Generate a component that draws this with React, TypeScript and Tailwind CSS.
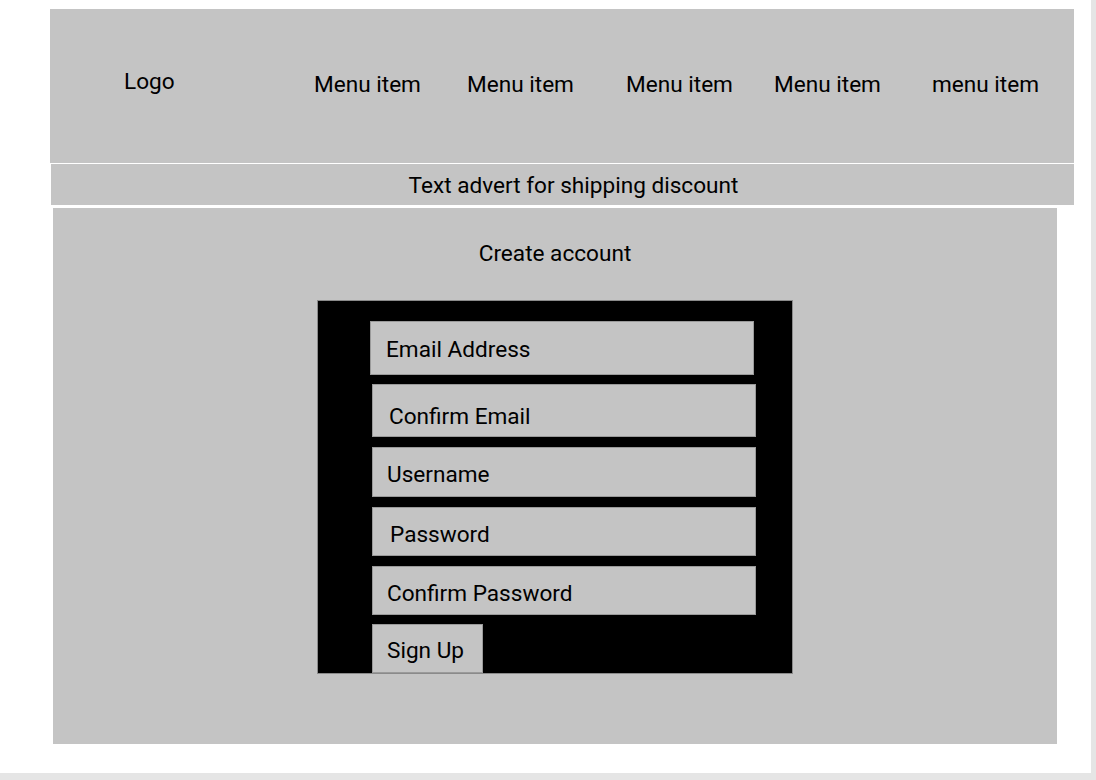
import React from "react"

const font = { fontFamily: "Roboto, 'Noto Sans', sans-serif" }

interface FieldData {
  label: string
  box: string
}

export default function App() {
  const menu = [
    { label: "Menu item", w: "w-[153px]" },
    { label: "Menu item", w: "w-[159px]" },
    { label: "Menu item", w: "w-[148px]" },
    { label: "Menu item", w: "w-[158px]" },
    { label: "menu item", w: "w-[94px]" },
  ]

  // each box has its own little offsets, as in the mockup
  const fields: FieldData[] = [
    { label: "Email Address", box: "ml-[52px] h-[54px] pt-[15px] pl-[15px]" },
    { label: "Confirm Email", box: "ml-[54px] mt-[9px] h-[53px] pt-[19px] pl-[16px]" },
    { label: "Username", box: "ml-[54px] mt-[10px] h-[50px] pt-[14px] pl-[14px]" },
    { label: "Password", box: "ml-[54px] mt-[10px] h-[49px] pt-[14px] pl-[17px]" },
    { label: "Confirm Password", box: "ml-[54px] mt-[10px] h-[49px] pt-[14px] pl-[14px]" },
  ]

  return (
    <div className="w-[1096px] h-[780px] bg-[#e5e5e5] overflow-hidden" style={font}>
      <div className="w-[1091px] h-[773px] bg-white pt-[9px] text-[22.6px] leading-[26px] text-black">
        {/* Header */}
        <div className="ml-[50px] w-[1024px] h-[154px] bg-[#c4c4c4] flex items-start">
          <div className="w-[264px] pl-[74px] pt-[60px]">Logo</div>
          {menu.map((m, i) => (
            <div key={i} className={`${m.w} pt-[63px] whitespace-nowrap`}>
              {m.label}
            </div>
          ))}
        </div>

        {/* Advert bar */}
        <div className="mt-[1px] ml-[51px] w-[1023px] h-[41px] bg-[#c4c4c4] text-center pl-[22px] pt-[9px]">
          Text advert for shipping discount
        </div>

        {/* Main panel */}
        <div className="mt-[3px] ml-[53px] w-[1004px] h-[536px] bg-[#c4c4c4] pt-[33px]">
          <div className="text-center">Create account</div>

          <div className="mt-[33px] ml-[264px] w-[476px] h-[374px] bg-black border border-[#8a8a8a] flex flex-col items-start pt-[20px]">
            {fields.map((f) => (
              <div key={f.label} className={`${f.box} w-[384px] bg-[#c4c4c4] border border-[#9a9a9a]`}>
                {f.label}
              </div>
            ))}
            <button className="ml-[54px] mt-[9px] h-[49px] w-[111px] bg-[#c4c4c4] border border-[#9a9a9a] text-left pt-[13px] pl-[14px] self-start flex items-start">
              Sign Up
            </button>
          </div>
        </div>
      </div>
    </div>
  )
}
